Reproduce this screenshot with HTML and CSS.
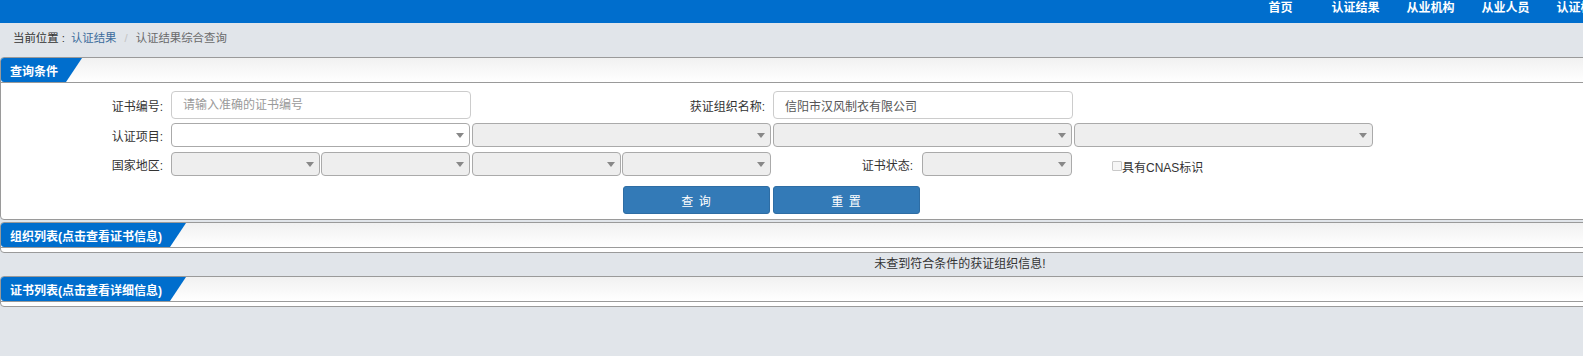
FILE: index.html
```html
<!DOCTYPE html>
<html lang="zh-CN">
<head>
<meta charset="utf-8">
<title>认证结果综合查询</title>
<link rel="stylesheet" href="styles.css">
</head>
<body>
<div class="page">
  <header class="topbar">
    <ul class="nav">
      <li>首页</li>
      <li>认证结果</li>
      <li>从业机构</li>
      <li>从业人员</li>
      <li>认证标准</li>
      <li>信息公开</li>
      <li>关于我们</li>
    </ul>
  </header>

  <div class="crumbs">
    <span class="crumb-label">当前位置 :</span><a class="crumb-link">认证结果</a><span class="crumb-sep">/</span><span class="crumb-current">认证结果综合查询</span>
  </div>

  <section class="panel">
    <div class="panel-head"><span class="tab">查询条件</span></div>
    <div class="panel-body query">
      <div class="row row-input">
        <label class="lbl">证书编号:</label>
        <div class="cell"><input class="txt" type="text" placeholder="请输入准确的证书编号"></div>
        <label class="lbl">获证组织名称:</label>
        <div class="cell"><input class="txt" type="text" value="信阳市汉风制衣有限公司"></div>
      </div>
      <div class="row row-sel">
        <label class="lbl">认证项目:</label>
        <div class="cell"><span class="sel sel-on"></span></div>
        <div class="cell"><span class="sel"></span></div>
        <div class="cell"><span class="sel"></span></div>
        <div class="cell"><span class="sel"></span></div>
      </div>
      <div class="row row-sel row-third">
        <label class="lbl">国家地区:</label>
        <div class="cell pair"><span class="sel"></span><span class="sel"></span></div>
        <div class="cell pair"><span class="sel"></span><span class="sel"></span></div>
        <div class="cell status">
          <label class="lbl-inline">证书状态:</label>
          <span class="sel sel-short"></span>
        </div>
        <div class="cell cnas">
          <span class="chk"></span><span class="chk-text">具有CNAS标识</span>
        </div>
      </div>
      <div class="row row-btn">
        <div class="cell btn-left"><button class="btn">查 询</button></div>
        <div class="cell btn-right"><button class="btn">重 置</button></div>
      </div>
    </div>
  </section>

  <section class="panel list">
    <div class="panel-head"><span class="tab">组织列表(点击查看证书信息)</span></div>
    <div class="panel-body empty"></div>
  </section>

  <div class="no-result">未查到符合条件的获证组织信息!</div>

  <section class="panel list flush">
    <div class="panel-head"><span class="tab">证书列表(点击查看详细信息)</span></div>
    <div class="panel-body empty"></div>
  </section>
</div>
</body>
</html>
```

FILE: styles.css
```css
html {
  overflow: hidden;
}

body {
  margin: 0;
  background: #e1e5ea;
  font-family: "Liberation Sans", "Noto Sans CJK SC", sans-serif;
  font-size: 12px;
  color: #333;
}

.page {
  width: 1920px;
}

/* top bar */
.topbar {
  height: 23px;
  background: #006ecd;
}

.nav {
  list-style: none;
  margin: 0 0 0 1243px;
  padding: 0;
  display: flex;
}

.nav li {
  width: 75px;
  text-align: center;
  color: #fff;
  font-weight: bold;
  font-size: 12px;
  line-height: 17px;
  white-space: nowrap;
}

/* breadcrumb */
.crumbs {
  height: 34px;
  line-height: 30px;
  padding-left: 13px;
  box-sizing: border-box;
  font-size: 11.4px;
}

.crumb-label {
  color: #333;
}

.crumb-link {
  color: #3c6c9c;
  margin-left: 6px;
}

.crumb-sep {
  color: #c4c4c4;
  padding: 0 8px;
}

.crumb-current {
  color: #6a6a6a;
}

/* panels */
.panel {
  background: #fff;
  border: 1px solid #9a9a9a;
  border-radius: 4px;
  margin-bottom: 2px;
}

.panel-head {
  height: 24px;
  border-bottom: 1px solid #9a9a9a;
  background: linear-gradient(#f1f1f1, #ffffff);
  border-radius: 4px 4px 0 0;
  display: flex;
}

.tab {
  display: flex;
  align-items: center;
  background: #006ecd;
  color: #fff;
  font-weight: bold;
  font-size: 12px;
  padding: 0 24px 0 9px;
  border-radius: 3px 0 0 3px;
  clip-path: polygon(0 0, 100% 0, calc(100% - 16px) 100%, 0 100%);
  white-space: nowrap;
}

.panel-body.empty {
  height: 4px;
}

.panel.flush {
  margin-bottom: 0;
}

.no-result {
  height: 23px;
  line-height: 23px;
  text-align: center;
  color: #333;
  margin-top: -2px;
}

/* query form */
.query {
  padding: 8px 0 5px;
}

.row {
  display: grid;
  grid-template-columns: 170px 301px 301px 301px 1fr;
  align-items: center;
}

.row-input {
  height: 28px;
  margin-bottom: 4px;
}

.row-sel {
  height: 24px;
  margin-bottom: 5px;
}

.row-third {
  margin-bottom: 10px;
}

.row-btn {
  height: 28px;
}

.lbl {
  text-align: right;
  padding-right: 8px;
  white-space: nowrap;
}

.cell {
  display: flex;
  align-items: center;
  height: 100%;
}

.txt {
  box-sizing: border-box;
  width: 300px;
  height: 28px;
  border: 1px solid #cccccc;
  border-radius: 4px;
  padding: 0 11px;
  font-family: inherit;
  font-size: 12px;
  color: #555;
  background: #fff;
  outline: none;
}

.txt::placeholder {
  color: #9a9a9a;
}

.sel {
  position: relative;
  box-sizing: border-box;
  width: 299px;
  height: 24px;
  border: 1px solid #aaaaaa;
  border-radius: 4px;
  background: #eeeeee;
}

.sel.sel-on {
  background: #fff;
}

.sel::after {
  content: "";
  position: absolute;
  right: 5px;
  top: 9px;
  border-style: solid;
  border-width: 5px 4px 0 4px;
  border-color: #888 transparent transparent transparent;
}

.pair .sel {
  width: 149px;
}

.pair .sel + .sel {
  margin-left: 1px;
}

.status {
  justify-content: flex-end;
  padding-right: 2px;
}

.lbl-inline {
  padding-right: 9px;
  white-space: nowrap;
}

.sel.sel-short {
  width: 150px;
}

.cnas {
  padding-left: 38px;
  padding-top: 4px;
}

.chk {
  box-sizing: border-box;
  width: 10px;
  height: 10px;
  border: 1px solid #c9c9c9;
  border-radius: 1px;
  background: #f6f6f6;
}

.chk-text {
  white-space: nowrap;
}

.btn-left {
  grid-column: 3;
  justify-content: flex-end;
  padding-right: 3px;
}

.btn-right {
  grid-column: 4;
}

.btn {
  width: 147px;
  height: 28px;
  border: 1px solid #2e6da4;
  border-radius: 3px;
  background: #337ab7;
  color: #fff;
  font-family: inherit;
  font-size: 12px;
  letter-spacing: 1px;
  padding: 0;
}
```
